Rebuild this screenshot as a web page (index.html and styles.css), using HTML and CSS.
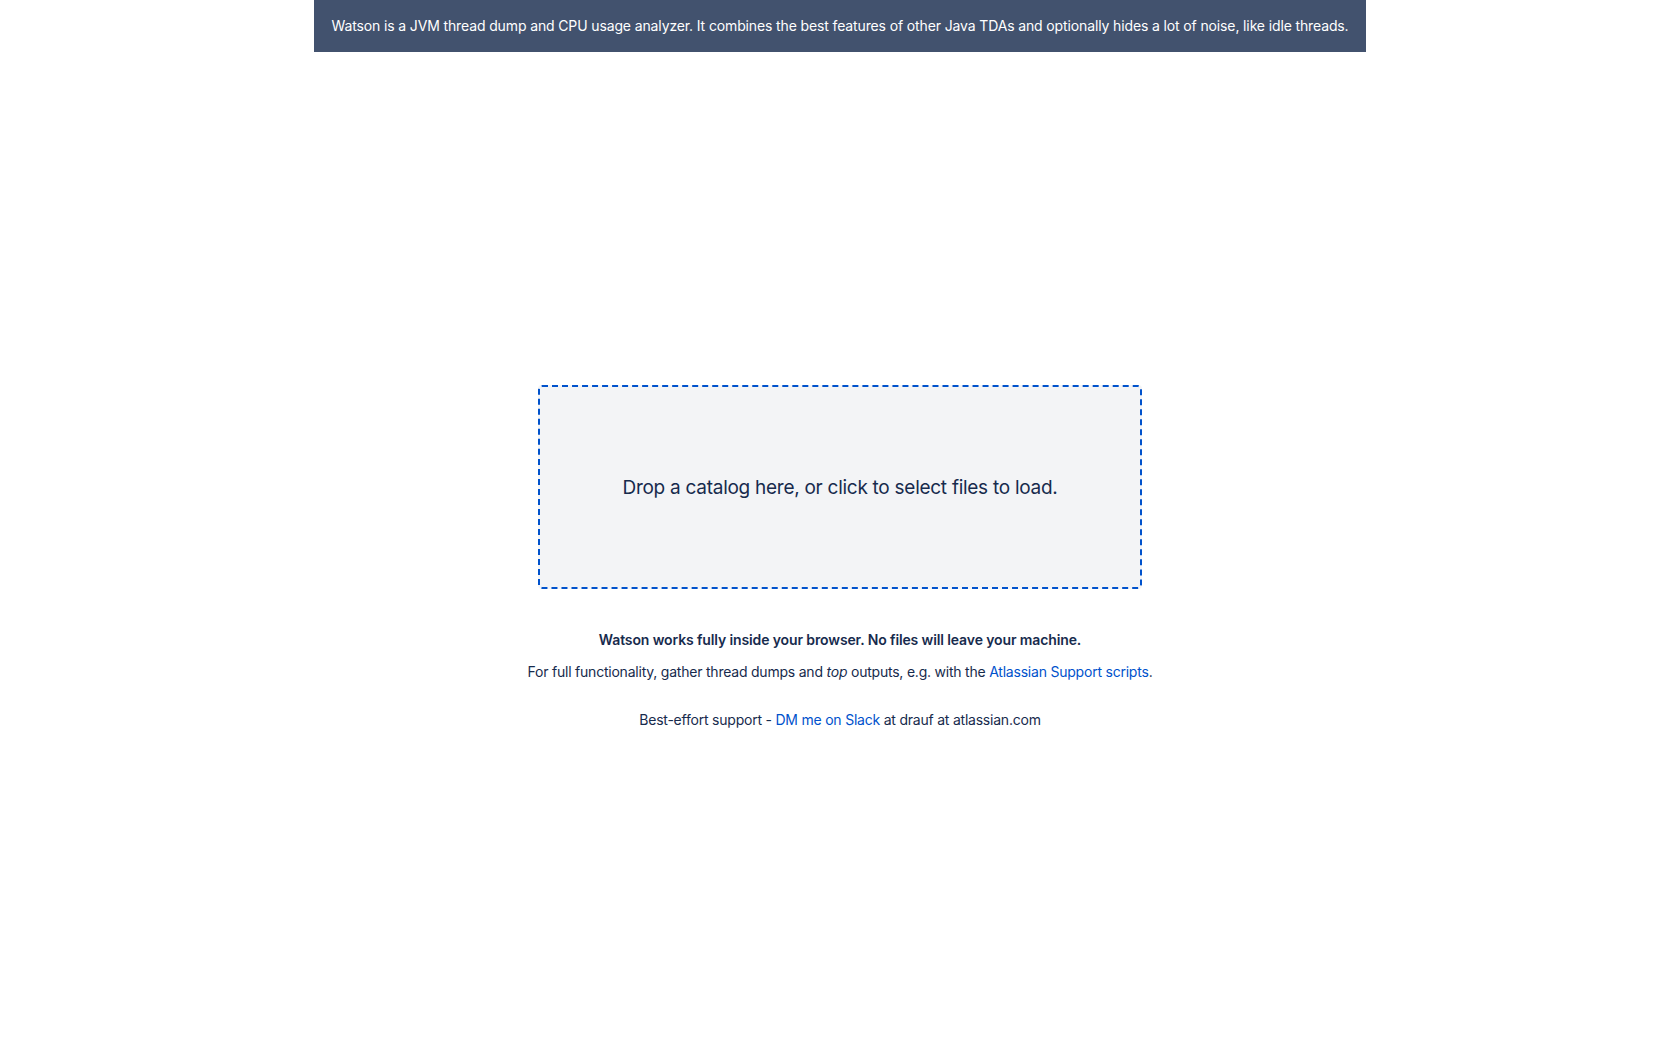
FILE: index.html
```html
<!DOCTYPE html>
<html lang="en">
<head>
<meta charset="utf-8">
<title>Watson</title>
<link rel="stylesheet" href="styles.css">
</head>
<body>
  <div class="page">
    <header class="banner-wrap">
      <div class="banner">Watson is a JVM thread dump and CPU usage analyzer. It combines the best features of other Java TDAs and optionally hides a lot of noise, like idle threads.</div>
    </header>
    <main class="main">
      <div class="dropzone">
        <p class="drop-text">Drop a catalog here, or click to select files to load.</p>
      </div>
      <div class="info">
        <p class="info-strong">Watson works fully inside your browser. No files will leave your machine.</p>
        <p class="info-line">For full functionality, gather thread dumps and <em>top</em> outputs, e.g. with the <a href="#" class="link">Atlassian Support scripts</a>.</p>
        <p class="info-line support">Best-effort support - <a href="#" class="link">DM me on Slack</a> at drauf at atlassian.com</p>
      </div>
    </main>
  </div>
</body>
</html>
```
FILE: styles.css
```css
* { box-sizing: border-box; }
html, body {
  margin: 0;
  padding: 0;
  background: #ffffff;
}
body {
  font-family: Inter, "Noto Sans", "Liberation Sans", sans-serif;
  color: #172b4d;
  font-size: 14px;
  line-height: 20px;
}
.page {
  display: flex;
  flex-direction: column;
  align-items: center;
}
.banner-wrap {
  display: flex;
  justify-content: center;
  width: 100%;
}
.banner {
  background: #42526e;
  color: #ffffff;
  padding: 16px 17px;
  font-size: 14px;
  line-height: 20px;
  letter-spacing: -0.13px;
  white-space: nowrap;
}
.main {
  display: flex;
  flex-direction: column;
  align-items: center;
  padding-top: 333px;
}
.dropzone {
  width: 604px;
  height: 204px;
  border: 2px dashed #0052cc;
  border-radius: 4px;
  background: #f3f4f6;
  display: flex;
  align-items: center;
  justify-content: center;
  cursor: pointer;
}
.drop-text {
  margin: 0;
  padding-top: 2px;
  font-size: 19px;
  line-height: 28px;
  letter-spacing: -0.27px;
  color: #172b4d;
}
.info {
  display: flex;
  flex-direction: column;
  align-items: center;
  margin-top: 41px;
  text-align: center;
}
.info p { margin: 0; }
.info-strong {
  font-weight: 600;
  letter-spacing: -0.12px;
}
.info-line {
  margin-top: 12px !important;
  letter-spacing: -0.22px;
}
.support {
  margin-top: 28px !important;
}
.link {
  color: #0052cc;
  text-decoration: none;
}
```
